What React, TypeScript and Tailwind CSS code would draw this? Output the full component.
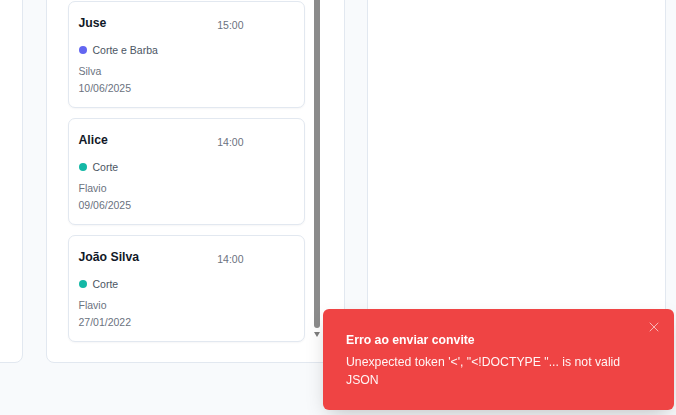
import React from 'react';
import { X } from 'lucide-react';

interface Appointment {
    id: number;
    client: string;
    time: string;
    service: string;
    dot: string;
    barber: string;
    date: string;
}

const appointments: Appointment[] = [
    { id: 1, client: 'Juse', time: '15:00', service: 'Corte e Barba', dot: 'bg-[#6366f1]', barber: 'Silva', date: '10/06/2025' },
    { id: 2, client: 'Alice', time: '14:00', service: 'Corte', dot: 'bg-[#14b8a6]', barber: 'Flavio', date: '09/06/2025' },
    { id: 3, client: 'João Silva', time: '14:00', service: 'Corte', dot: 'bg-[#14b8a6]', barber: 'Flavio', date: '27/01/2022' },
];

const AppointmentCard: React.FC<{ item: Appointment }> = ({ item }) => {
    return (
        <div className="rounded-[7px] border border-[#e2e8f0] bg-white px-[10px] pt-[12.5px] pb-[12px] shadow-[0_1px_2px_rgba(15,23,42,0.04)]">
            <div className="flex items-start justify-between">
                <h3 className="text-[12.25px] leading-[17.5px] font-bold text-[#111827]">{item.client}</h3>
                <span className="mt-[3px] mr-[50px] text-[10.5px] leading-[14px] text-[#6b7280]">{item.time}</span>
            </div>
            <div className="mt-[10.5px] flex items-center gap-[6px]">
                <span className={`h-2 w-2 rounded-full ${item.dot}`} />
                <span className="text-[10.5px] leading-[14px] text-[#4b5563]">{item.service}</span>
            </div>
            <p className="mt-[7px] text-[10.5px] leading-[14px] text-[#6b7280]">{item.barber}</p>
            <p className="mt-[3.5px] text-[10.5px] leading-[14px] text-[#6b7280]">{item.date}</p>
        </div>
    );
};

const Toast: React.FC = () => {
    return (
        <div className="fixed right-[2px] bottom-[5px] w-[351px] rounded-[6px] bg-[#ef4444] pt-[23.5px] pb-[21px] pl-[23px] pr-[28px] shadow-[0_8px_20px_-6px_rgba(0,0,0,0.25)]">
            <button className="absolute top-[10px] right-[12px] text-white/60" aria-label="Fechar">
                <X size={16} strokeWidth={1.5} />
            </button>
            <p className="text-[12.25px] leading-[17.5px] font-bold text-white">Erro ao enviar convite</p>
            <p className="mt-[4.5px] text-[12.25px] leading-[17.5px] text-white/95">
                Unexpected token '&lt;', "&lt;!DOCTYPE "... is not valid
                <br />
                JSON
            </p>
        </div>
    );
};

export default function App() {
    return (
        <div className="h-[415px] w-full overflow-hidden bg-[#f8fafc] font-['Liberation_Sans',Arial,sans-serif]">
            <div className="-mt-[20px] -ml-[276px] flex h-[383px] gap-[22.5px]">
                <section className="h-full w-[299px] shrink-0 rounded-lg border border-[#e2e8f0] bg-white" />

                <section className="flex h-full w-[299px] shrink-0 rounded-lg border border-[#e2e8f0] bg-white pt-[20px] pb-[20px] pl-[21px]">
                    <div className="flex w-[237px] flex-col justify-end gap-[10px]">
                        {appointments.map(item => (
                            <AppointmentCard key={item.id} item={item} />
                        ))}
                    </div>
                    <div className="-mt-[20px] ml-[9px] flex w-[6px] flex-col items-center pb-[5px]">
                        <div className="w-[6px] flex-1 rounded-b-full bg-[#8b8b8b]" />
                        <div className="mt-[4px] h-0 w-0 border-x-[3.5px] border-t-[5px] border-x-transparent border-t-[#7d7d7d]" />
                    </div>
                </section>

                <section className="h-full w-[299px] shrink-0 rounded-lg border border-[#e2e8f0] bg-white" />
            </div>

            <Toast />
        </div>
    );
}
